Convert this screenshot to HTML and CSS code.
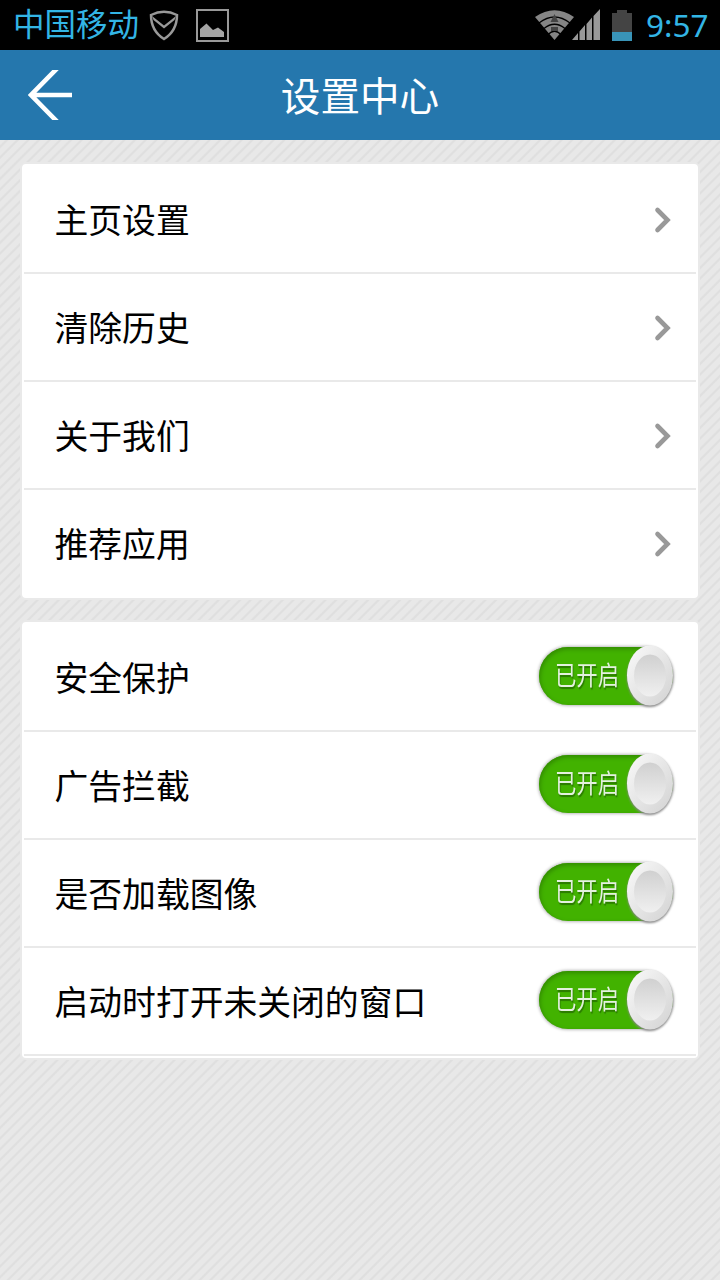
FILE: index.html
```
<!DOCTYPE html>
<html lang="zh-CN">
<head>
    <meta charset="UTF-8">
    <meta name="viewport" content="width=device-width, initial-scale=1.0">
    <title>设置中心</title>
    <link rel="stylesheet" href="styles.css">
</head>
<body>
    <!-- shared shapes -->
    <svg class="defs" width="0" height="0">
        <defs>
            <linearGradient id="knobOuter" x1="0" y1="0" x2="1" y2="1">
                <stop offset="0" stop-color="#fafafa"/>
                <stop offset="1" stop-color="#d2d2d2"/>
            </linearGradient>
            <linearGradient id="knobInner" x1="0" y1="0" x2="0" y2="1">
                <stop offset="0" stop-color="#d0d0d0"/>
                <stop offset="1" stop-color="#f0f0f0"/>
            </linearGradient>
            <filter id="soft" x="-30%" y="-30%" width="160%" height="160%">
                <feGaussianBlur stdDeviation="1.3"/>
            </filter>
            <filter id="edge" x="-10%" y="-10%" width="120%" height="120%">
                <feGaussianBlur stdDeviation="0.6"/>
            </filter>
            <symbol id="chevron" viewBox="0 0 20 30">
                <path d="M4.500 5L14.500 15L4.500 25" fill="none" stroke="#999" stroke-width="4.600" stroke-linecap="round"/>
            </symbol>
            <symbol id="knob" viewBox="0 0 56 70">
                <ellipse cx="28" cy="36" rx="23" ry="30" fill="#888" filter="url(#soft)"/>
                <ellipse cx="28" cy="34.500" rx="23" ry="30" fill="url(#knobOuter)"/>
                <ellipse cx="28" cy="34.500" rx="16" ry="21" fill="url(#knobInner)" filter="url(#edge)"/>
            </symbol>
        </defs>
    </svg>

    <div class="status-bar">
        <span class="carrier">中国移动</span>
        <svg class="shield" width="30" height="32" viewBox="0 0 30 32">
            <path d="M2 6Q15 -0.500 28 6C28 17 23 25 15 30C7 25 2 17 2 6Z" fill="none" stroke="#999" stroke-width="2.500"/>
            <path d="M3 7L15 16.500L27 7L25.500 11L15 19.500L4.500 11Z" fill="#999"/>
        </svg>
        <svg class="picture" width="33" height="33" viewBox="0 0 33 33">
            <rect x="1" y="1" width="31" height="31" fill="none" stroke="#999" stroke-width="2"/>
            <path d="M4 28V20L10.500 14.500L17 21L22 18.500L28 23V28Z" fill="#a5a5a5"/>
        </svg>
        <div class="status-right">
            <svg class="wifi" width="40" height="32" viewBox="0 0 40 32">
                <path d="M0 8Q19.500 -5.500 39 8L19.500 31Z" fill="#858585"/>
                <path d="M4 14Q19.500 2 35 14M9 19.500Q19.500 11 30 19.500M13.500 25Q19.500 19.500 25.500 25" fill="none" stroke="#000" stroke-width="1.300"/>
                <path d="M19.500 5L23.500 13H15.500ZM16 18H23V22H16Z" fill="#444"/>
            </svg>
            <svg class="signal" width="28" height="32" viewBox="0 0 28 32">
                <path d="M0 31L6 24V31ZM7.500 31V22.500L13 16V31ZM14.500 31V15L20 8.500V31ZM21.500 31V7L28 0V31Z" fill="#999"/>
            </svg>
            <svg class="battery" width="20" height="31" viewBox="0 0 20 31">
                <path d="M0 3H5V0H15V3H20V31H0Z" fill="#444"/>
                <path d="M0 22H20V31H0Z" fill="#3994b8"/>
            </svg>
            <span class="clock">9:57</span>
        </div>
    </div>

    <header class="header">
        <a href="#" class="back">
            <svg width="44" height="50" viewBox="0 0 44 50">
                <path d="M29.500 -2L3 25L29.500 52M3 25H44" fill="none" stroke="#fff" stroke-width="4.600"/>
            </svg>
        </a>
        <h1 class="header-title">设置中心</h1>
    </header>

    <main class="content">
        <ul class="card">
            <li class="row"><span class="label">主页设置</span><svg class="chevron"><use href="#chevron"/></svg></li>
            <li class="row"><span class="label">清除历史</span><svg class="chevron"><use href="#chevron"/></svg></li>
            <li class="row"><span class="label">关于我们</span><svg class="chevron"><use href="#chevron"/></svg></li>
            <li class="row last"><span class="label">推荐应用</span><svg class="chevron"><use href="#chevron"/></svg></li>
        </ul>

        <ul class="card">
            <li class="row">
                <span class="label">安全保护</span>
                <button class="switch"><span>已开启</span><svg class="knob"><use href="#knob"/></svg></button>
            </li>
            <li class="row">
                <span class="label">广告拦截</span>
                <button class="switch"><span>已开启</span><svg class="knob"><use href="#knob"/></svg></button>
            </li>
            <li class="row">
                <span class="label">是否加载图像</span>
                <button class="switch"><span>已开启</span><svg class="knob"><use href="#knob"/></svg></button>
            </li>
            <li class="row">
                <span class="label">启动时打开未关闭的窗口</span>
                <button class="switch"><span>已开启</span><svg class="knob"><use href="#knob"/></svg></button>
            </li>
        </ul>
    </main>
</body>
</html>
```
FILE: styles.css
```
:root {
    --primary: #2577ad;
    --holo: #33b5e5;
    --line: #e9e9e9;
}

* {
    margin: 0;
    padding: 0;
    box-sizing: border-box;
}

body {
    font-family: Roboto, 'Noto Sans CJK SC', sans-serif;
    min-height: 100vh;
    color: #000;
    background: repeating-linear-gradient(135deg, #e8e8e8 0, #e8e8e8 4.2px, #dfdfdf 5.4px, #dfdfdf 6.4px, #e8e8e8 7.54px);
}

.defs {
    position: absolute;
}

.status-bar {
    height: 50px;
    background: #000;
    display: flex;
    align-items: center;
    padding: 0 12px 0 13px;
    color: var(--holo);
}

.carrier {
    font-size: 31.5px;
    line-height: 48px;
    padding-top: 2px;
    font-weight: 400;
    width: 136px;
    white-space: nowrap;
}

.picture {
    margin-left: 17px;
}

.status-right {
    display: flex;
    align-items: center;
    margin-left: auto;
}

.signal {
    margin-right: 12px;
    margin-left: -3px;
}

.clock {
    font-family: 'Noto Sans', Roboto, sans-serif;
    font-size: 31.5px;
    line-height: 48px;
    width: 62px;
    margin-left: 14px;
    font-weight: 400;
}

.header {
    height: 90px;
    background: var(--primary);
    display: flex;
    align-items: center;
    padding: 0 28px;
}

.back {
    display: flex;
}

.header-title {
    flex: 1;
    margin-right: 44px;
    padding-top: 6px;
    text-align: center;
    color: #fff;
    font-size: 39.6px;
    line-height: 84px;
    font-weight: 400;
}

.content {
    padding: 22px 20px;
}

.card {
    list-style: none;
    background: #fff;
    border: 2px solid var(--line);
    border-radius: 6px;
    padding: 2px;
    margin-bottom: 20px;
}

.row {
    display: flex;
    align-items: center;
    justify-content: space-between;
    height: 108px;
    padding-left: 30.5px;
    border-bottom: 2px solid var(--line);
    font-size: 33.8px;
    line-height: 50px;
}

.row.last {
    height: 106px;
    border-bottom: none;
}

.label {
    padding-top: 6px;
}

.chevron {
    width: 20px;
    height: 30px;
    margin-top: 1px;
    margin-right: 23px;
}

.switch {
    display: flex;
    align-items: center;
    justify-content: space-between;
    width: 134px;
    height: 58px;
    margin-right: 23px;
    margin-bottom: 2px;
    padding-left: 16px;
    border: none;
    border-radius: 29px;
    background: #42b200;
    box-shadow: 0 0 3px 1px #bbb, inset 1px 2px 4px #318900;
    color: #e4f1df;
    font-family: inherit;
    font-size: 26px;
}

.switch span {
    transform: scaleX(0.82);
    transform-origin: left;
    margin-right: -14px;
    padding-bottom: 5px;
    text-shadow: 1px 2px 1px #2b7a00;
}

.knob {
    flex: none;
    width: 56px;
    height: 70px;
    margin-right: -5px;
}
```
